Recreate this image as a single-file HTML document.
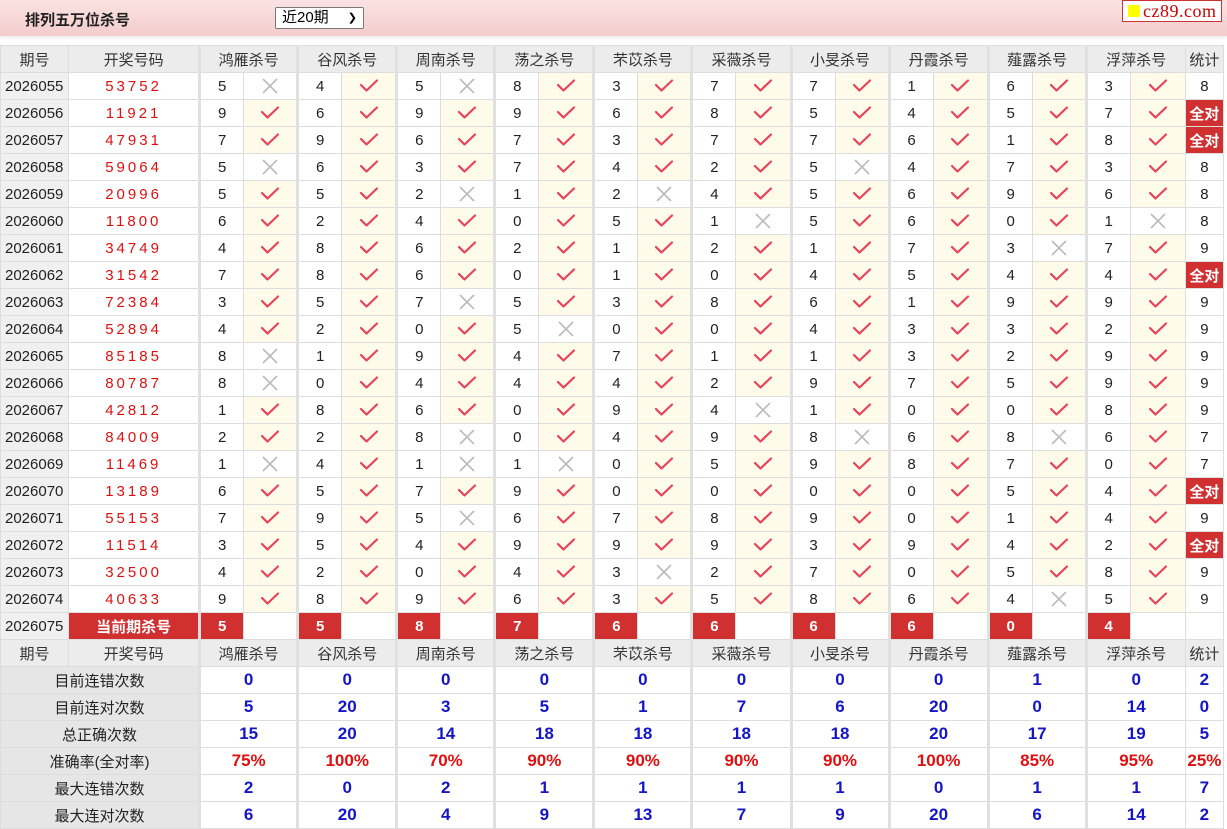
<!DOCTYPE html>
<html><head><meta charset="utf-8">
<style>
body{margin:0;width:1227px;height:829px;background:#fff;font-family:"Liberation Sans","Noto Sans CJK SC",sans-serif;position:relative;overflow:hidden}
.top{position:absolute;left:0;top:0;width:1227px;height:36px;background:linear-gradient(#fbe3e3,#f4cccc);box-shadow:0 2px 3px #eee}
.title{position:absolute;left:25px;top:9px;font-size:15px;font-weight:bold;color:#222}
.sel{position:absolute;left:275px;top:7px;border:1px solid #777;border-radius:2px;background:#fff;font-size:15px;line-height:20px;padding-left:6px;box-sizing:border-box;width:89px;height:22px}
.sel span{position:absolute;right:6px;top:0;font-size:11px}
.logo{position:absolute;left:1122px;top:0;width:100px;height:22px;border:1px solid #c33;background:#fff;box-sizing:border-box}
.logo i{position:absolute;left:5px;top:4px;width:12px;height:12px;background:#ff0}
.logo b{position:absolute;left:20px;top:0;font:18px "Liberation Serif",serif;color:#c00;letter-spacing:0.5px;line-height:20px;font-weight:normal}
table{position:absolute;left:0;top:45px;border-collapse:collapse;table-layout:fixed;width:1224px}
td{border:1px solid #ddd;height:26px;padding:0;text-align:center;font-size:15px;color:#222;white-space:nowrap;overflow:hidden}
tr.h td{background:#ececec;color:#333}
td.p{background:#f0f0f0;text-align:left;padding-left:4px;font-size:15px}
td.k{color:#d11;letter-spacing:3px}
td.g{border-left:3px solid #e0e0e0}
td.y{background:#fffbea}
td.n{background:#fff}
td.r{background:#d03030;color:#fff;font-weight:bold}
td.rl{background:#d03030;color:#fff;font-weight:bold}
td.l{background:#e6e6e6;color:#222}
td.b{color:#1515c8;font-weight:bold;font-size:17px}
td.pc{color:#e01010;font-weight:bold;font-size:17px}
svg{display:block;margin:auto}
</style></head><body>
<svg width="0" height="0" style="position:absolute"><defs>
<symbol id="c" viewBox="0 0 22 16"><path d="M3 7 L8.5 12.5 L19 2.5" fill="none" stroke="#e8435a" stroke-width="2.2" stroke-linecap="round" stroke-linejoin="round"/></symbol>
<symbol id="x" viewBox="0 0 16 16"><path d="M1 1 L15 15 M15 1 L1 15" fill="none" stroke="#bbb" stroke-width="1.6"/></symbol>
</defs></svg>
<div class="top"><div class="title">排列五万位杀号</div><div class="sel">近20期<span>&#10095;</span></div></div>
<div class="logo"><i></i><b>cz89.com</b></div>
<table>
<colgroup><col style="width:68px"><col style="width:131px">
<col style="width:44px"><col style="width:54px"><col style="width:44px"><col style="width:55px"><col style="width:44px"><col style="width:54px"><col style="width:44px"><col style="width:55px"><col style="width:44px"><col style="width:54px"><col style="width:44px"><col style="width:55px"><col style="width:44px"><col style="width:54px"><col style="width:44px"><col style="width:55px"><col style="width:44px"><col style="width:54px"><col style="width:44px"><col style="width:55px"><col style="width:38px"></colgroup>
<tr class="h"><td>期号</td><td>开奖号码</td><td class="g" colspan="2">鸿雁杀号</td><td class="g" colspan="2">谷风杀号</td><td class="g" colspan="2">周南杀号</td><td class="g" colspan="2">荡之杀号</td><td class="g" colspan="2">芣苡杀号</td><td class="g" colspan="2">采薇杀号</td><td class="g" colspan="2">小旻杀号</td><td class="g" colspan="2">丹霞杀号</td><td class="g" colspan="2">薤露杀号</td><td class="g" colspan="2">浮萍杀号</td><td>统计</td></tr>
<tr><td class="p">2026055</td><td class="k">53752</td><td class="g">5</td><td class="n"><svg width="16" height="16"><use href="#x"/></svg></td><td class="g">4</td><td class="y"><svg width="22" height="16"><use href="#c"/></svg></td><td class="g">5</td><td class="n"><svg width="16" height="16"><use href="#x"/></svg></td><td class="g">8</td><td class="y"><svg width="22" height="16"><use href="#c"/></svg></td><td class="g">3</td><td class="y"><svg width="22" height="16"><use href="#c"/></svg></td><td class="g">7</td><td class="y"><svg width="22" height="16"><use href="#c"/></svg></td><td class="g">7</td><td class="y"><svg width="22" height="16"><use href="#c"/></svg></td><td class="g">1</td><td class="y"><svg width="22" height="16"><use href="#c"/></svg></td><td class="g">6</td><td class="y"><svg width="22" height="16"><use href="#c"/></svg></td><td class="g">3</td><td class="y"><svg width="22" height="16"><use href="#c"/></svg></td><td>8</td></tr>
<tr><td class="p">2026056</td><td class="k">11921</td><td class="g">9</td><td class="y"><svg width="22" height="16"><use href="#c"/></svg></td><td class="g">6</td><td class="y"><svg width="22" height="16"><use href="#c"/></svg></td><td class="g">9</td><td class="y"><svg width="22" height="16"><use href="#c"/></svg></td><td class="g">9</td><td class="y"><svg width="22" height="16"><use href="#c"/></svg></td><td class="g">6</td><td class="y"><svg width="22" height="16"><use href="#c"/></svg></td><td class="g">8</td><td class="y"><svg width="22" height="16"><use href="#c"/></svg></td><td class="g">5</td><td class="y"><svg width="22" height="16"><use href="#c"/></svg></td><td class="g">4</td><td class="y"><svg width="22" height="16"><use href="#c"/></svg></td><td class="g">5</td><td class="y"><svg width="22" height="16"><use href="#c"/></svg></td><td class="g">7</td><td class="y"><svg width="22" height="16"><use href="#c"/></svg></td><td class="r">全对</td></tr>
<tr><td class="p">2026057</td><td class="k">47931</td><td class="g">7</td><td class="y"><svg width="22" height="16"><use href="#c"/></svg></td><td class="g">9</td><td class="y"><svg width="22" height="16"><use href="#c"/></svg></td><td class="g">6</td><td class="y"><svg width="22" height="16"><use href="#c"/></svg></td><td class="g">7</td><td class="y"><svg width="22" height="16"><use href="#c"/></svg></td><td class="g">3</td><td class="y"><svg width="22" height="16"><use href="#c"/></svg></td><td class="g">7</td><td class="y"><svg width="22" height="16"><use href="#c"/></svg></td><td class="g">7</td><td class="y"><svg width="22" height="16"><use href="#c"/></svg></td><td class="g">6</td><td class="y"><svg width="22" height="16"><use href="#c"/></svg></td><td class="g">1</td><td class="y"><svg width="22" height="16"><use href="#c"/></svg></td><td class="g">8</td><td class="y"><svg width="22" height="16"><use href="#c"/></svg></td><td class="r">全对</td></tr>
<tr><td class="p">2026058</td><td class="k">59064</td><td class="g">5</td><td class="n"><svg width="16" height="16"><use href="#x"/></svg></td><td class="g">6</td><td class="y"><svg width="22" height="16"><use href="#c"/></svg></td><td class="g">3</td><td class="y"><svg width="22" height="16"><use href="#c"/></svg></td><td class="g">7</td><td class="y"><svg width="22" height="16"><use href="#c"/></svg></td><td class="g">4</td><td class="y"><svg width="22" height="16"><use href="#c"/></svg></td><td class="g">2</td><td class="y"><svg width="22" height="16"><use href="#c"/></svg></td><td class="g">5</td><td class="n"><svg width="16" height="16"><use href="#x"/></svg></td><td class="g">4</td><td class="y"><svg width="22" height="16"><use href="#c"/></svg></td><td class="g">7</td><td class="y"><svg width="22" height="16"><use href="#c"/></svg></td><td class="g">3</td><td class="y"><svg width="22" height="16"><use href="#c"/></svg></td><td>8</td></tr>
<tr><td class="p">2026059</td><td class="k">20996</td><td class="g">5</td><td class="y"><svg width="22" height="16"><use href="#c"/></svg></td><td class="g">5</td><td class="y"><svg width="22" height="16"><use href="#c"/></svg></td><td class="g">2</td><td class="n"><svg width="16" height="16"><use href="#x"/></svg></td><td class="g">1</td><td class="y"><svg width="22" height="16"><use href="#c"/></svg></td><td class="g">2</td><td class="n"><svg width="16" height="16"><use href="#x"/></svg></td><td class="g">4</td><td class="y"><svg width="22" height="16"><use href="#c"/></svg></td><td class="g">5</td><td class="y"><svg width="22" height="16"><use href="#c"/></svg></td><td class="g">6</td><td class="y"><svg width="22" height="16"><use href="#c"/></svg></td><td class="g">9</td><td class="y"><svg width="22" height="16"><use href="#c"/></svg></td><td class="g">6</td><td class="y"><svg width="22" height="16"><use href="#c"/></svg></td><td>8</td></tr>
<tr><td class="p">2026060</td><td class="k">11800</td><td class="g">6</td><td class="y"><svg width="22" height="16"><use href="#c"/></svg></td><td class="g">2</td><td class="y"><svg width="22" height="16"><use href="#c"/></svg></td><td class="g">4</td><td class="y"><svg width="22" height="16"><use href="#c"/></svg></td><td class="g">0</td><td class="y"><svg width="22" height="16"><use href="#c"/></svg></td><td class="g">5</td><td class="y"><svg width="22" height="16"><use href="#c"/></svg></td><td class="g">1</td><td class="n"><svg width="16" height="16"><use href="#x"/></svg></td><td class="g">5</td><td class="y"><svg width="22" height="16"><use href="#c"/></svg></td><td class="g">6</td><td class="y"><svg width="22" height="16"><use href="#c"/></svg></td><td class="g">0</td><td class="y"><svg width="22" height="16"><use href="#c"/></svg></td><td class="g">1</td><td class="n"><svg width="16" height="16"><use href="#x"/></svg></td><td>8</td></tr>
<tr><td class="p">2026061</td><td class="k">34749</td><td class="g">4</td><td class="y"><svg width="22" height="16"><use href="#c"/></svg></td><td class="g">8</td><td class="y"><svg width="22" height="16"><use href="#c"/></svg></td><td class="g">6</td><td class="y"><svg width="22" height="16"><use href="#c"/></svg></td><td class="g">2</td><td class="y"><svg width="22" height="16"><use href="#c"/></svg></td><td class="g">1</td><td class="y"><svg width="22" height="16"><use href="#c"/></svg></td><td class="g">2</td><td class="y"><svg width="22" height="16"><use href="#c"/></svg></td><td class="g">1</td><td class="y"><svg width="22" height="16"><use href="#c"/></svg></td><td class="g">7</td><td class="y"><svg width="22" height="16"><use href="#c"/></svg></td><td class="g">3</td><td class="n"><svg width="16" height="16"><use href="#x"/></svg></td><td class="g">7</td><td class="y"><svg width="22" height="16"><use href="#c"/></svg></td><td>9</td></tr>
<tr><td class="p">2026062</td><td class="k">31542</td><td class="g">7</td><td class="y"><svg width="22" height="16"><use href="#c"/></svg></td><td class="g">8</td><td class="y"><svg width="22" height="16"><use href="#c"/></svg></td><td class="g">6</td><td class="y"><svg width="22" height="16"><use href="#c"/></svg></td><td class="g">0</td><td class="y"><svg width="22" height="16"><use href="#c"/></svg></td><td class="g">1</td><td class="y"><svg width="22" height="16"><use href="#c"/></svg></td><td class="g">0</td><td class="y"><svg width="22" height="16"><use href="#c"/></svg></td><td class="g">4</td><td class="y"><svg width="22" height="16"><use href="#c"/></svg></td><td class="g">5</td><td class="y"><svg width="22" height="16"><use href="#c"/></svg></td><td class="g">4</td><td class="y"><svg width="22" height="16"><use href="#c"/></svg></td><td class="g">4</td><td class="y"><svg width="22" height="16"><use href="#c"/></svg></td><td class="r">全对</td></tr>
<tr><td class="p">2026063</td><td class="k">72384</td><td class="g">3</td><td class="y"><svg width="22" height="16"><use href="#c"/></svg></td><td class="g">5</td><td class="y"><svg width="22" height="16"><use href="#c"/></svg></td><td class="g">7</td><td class="n"><svg width="16" height="16"><use href="#x"/></svg></td><td class="g">5</td><td class="y"><svg width="22" height="16"><use href="#c"/></svg></td><td class="g">3</td><td class="y"><svg width="22" height="16"><use href="#c"/></svg></td><td class="g">8</td><td class="y"><svg width="22" height="16"><use href="#c"/></svg></td><td class="g">6</td><td class="y"><svg width="22" height="16"><use href="#c"/></svg></td><td class="g">1</td><td class="y"><svg width="22" height="16"><use href="#c"/></svg></td><td class="g">9</td><td class="y"><svg width="22" height="16"><use href="#c"/></svg></td><td class="g">9</td><td class="y"><svg width="22" height="16"><use href="#c"/></svg></td><td>9</td></tr>
<tr><td class="p">2026064</td><td class="k">52894</td><td class="g">4</td><td class="y"><svg width="22" height="16"><use href="#c"/></svg></td><td class="g">2</td><td class="y"><svg width="22" height="16"><use href="#c"/></svg></td><td class="g">0</td><td class="y"><svg width="22" height="16"><use href="#c"/></svg></td><td class="g">5</td><td class="n"><svg width="16" height="16"><use href="#x"/></svg></td><td class="g">0</td><td class="y"><svg width="22" height="16"><use href="#c"/></svg></td><td class="g">0</td><td class="y"><svg width="22" height="16"><use href="#c"/></svg></td><td class="g">4</td><td class="y"><svg width="22" height="16"><use href="#c"/></svg></td><td class="g">3</td><td class="y"><svg width="22" height="16"><use href="#c"/></svg></td><td class="g">3</td><td class="y"><svg width="22" height="16"><use href="#c"/></svg></td><td class="g">2</td><td class="y"><svg width="22" height="16"><use href="#c"/></svg></td><td>9</td></tr>
<tr><td class="p">2026065</td><td class="k">85185</td><td class="g">8</td><td class="n"><svg width="16" height="16"><use href="#x"/></svg></td><td class="g">1</td><td class="y"><svg width="22" height="16"><use href="#c"/></svg></td><td class="g">9</td><td class="y"><svg width="22" height="16"><use href="#c"/></svg></td><td class="g">4</td><td class="y"><svg width="22" height="16"><use href="#c"/></svg></td><td class="g">7</td><td class="y"><svg width="22" height="16"><use href="#c"/></svg></td><td class="g">1</td><td class="y"><svg width="22" height="16"><use href="#c"/></svg></td><td class="g">1</td><td class="y"><svg width="22" height="16"><use href="#c"/></svg></td><td class="g">3</td><td class="y"><svg width="22" height="16"><use href="#c"/></svg></td><td class="g">2</td><td class="y"><svg width="22" height="16"><use href="#c"/></svg></td><td class="g">9</td><td class="y"><svg width="22" height="16"><use href="#c"/></svg></td><td>9</td></tr>
<tr><td class="p">2026066</td><td class="k">80787</td><td class="g">8</td><td class="n"><svg width="16" height="16"><use href="#x"/></svg></td><td class="g">0</td><td class="y"><svg width="22" height="16"><use href="#c"/></svg></td><td class="g">4</td><td class="y"><svg width="22" height="16"><use href="#c"/></svg></td><td class="g">4</td><td class="y"><svg width="22" height="16"><use href="#c"/></svg></td><td class="g">4</td><td class="y"><svg width="22" height="16"><use href="#c"/></svg></td><td class="g">2</td><td class="y"><svg width="22" height="16"><use href="#c"/></svg></td><td class="g">9</td><td class="y"><svg width="22" height="16"><use href="#c"/></svg></td><td class="g">7</td><td class="y"><svg width="22" height="16"><use href="#c"/></svg></td><td class="g">5</td><td class="y"><svg width="22" height="16"><use href="#c"/></svg></td><td class="g">9</td><td class="y"><svg width="22" height="16"><use href="#c"/></svg></td><td>9</td></tr>
<tr><td class="p">2026067</td><td class="k">42812</td><td class="g">1</td><td class="y"><svg width="22" height="16"><use href="#c"/></svg></td><td class="g">8</td><td class="y"><svg width="22" height="16"><use href="#c"/></svg></td><td class="g">6</td><td class="y"><svg width="22" height="16"><use href="#c"/></svg></td><td class="g">0</td><td class="y"><svg width="22" height="16"><use href="#c"/></svg></td><td class="g">9</td><td class="y"><svg width="22" height="16"><use href="#c"/></svg></td><td class="g">4</td><td class="n"><svg width="16" height="16"><use href="#x"/></svg></td><td class="g">1</td><td class="y"><svg width="22" height="16"><use href="#c"/></svg></td><td class="g">0</td><td class="y"><svg width="22" height="16"><use href="#c"/></svg></td><td class="g">0</td><td class="y"><svg width="22" height="16"><use href="#c"/></svg></td><td class="g">8</td><td class="y"><svg width="22" height="16"><use href="#c"/></svg></td><td>9</td></tr>
<tr><td class="p">2026068</td><td class="k">84009</td><td class="g">2</td><td class="y"><svg width="22" height="16"><use href="#c"/></svg></td><td class="g">2</td><td class="y"><svg width="22" height="16"><use href="#c"/></svg></td><td class="g">8</td><td class="n"><svg width="16" height="16"><use href="#x"/></svg></td><td class="g">0</td><td class="y"><svg width="22" height="16"><use href="#c"/></svg></td><td class="g">4</td><td class="y"><svg width="22" height="16"><use href="#c"/></svg></td><td class="g">9</td><td class="y"><svg width="22" height="16"><use href="#c"/></svg></td><td class="g">8</td><td class="n"><svg width="16" height="16"><use href="#x"/></svg></td><td class="g">6</td><td class="y"><svg width="22" height="16"><use href="#c"/></svg></td><td class="g">8</td><td class="n"><svg width="16" height="16"><use href="#x"/></svg></td><td class="g">6</td><td class="y"><svg width="22" height="16"><use href="#c"/></svg></td><td>7</td></tr>
<tr><td class="p">2026069</td><td class="k">11469</td><td class="g">1</td><td class="n"><svg width="16" height="16"><use href="#x"/></svg></td><td class="g">4</td><td class="y"><svg width="22" height="16"><use href="#c"/></svg></td><td class="g">1</td><td class="n"><svg width="16" height="16"><use href="#x"/></svg></td><td class="g">1</td><td class="n"><svg width="16" height="16"><use href="#x"/></svg></td><td class="g">0</td><td class="y"><svg width="22" height="16"><use href="#c"/></svg></td><td class="g">5</td><td class="y"><svg width="22" height="16"><use href="#c"/></svg></td><td class="g">9</td><td class="y"><svg width="22" height="16"><use href="#c"/></svg></td><td class="g">8</td><td class="y"><svg width="22" height="16"><use href="#c"/></svg></td><td class="g">7</td><td class="y"><svg width="22" height="16"><use href="#c"/></svg></td><td class="g">0</td><td class="y"><svg width="22" height="16"><use href="#c"/></svg></td><td>7</td></tr>
<tr><td class="p">2026070</td><td class="k">13189</td><td class="g">6</td><td class="y"><svg width="22" height="16"><use href="#c"/></svg></td><td class="g">5</td><td class="y"><svg width="22" height="16"><use href="#c"/></svg></td><td class="g">7</td><td class="y"><svg width="22" height="16"><use href="#c"/></svg></td><td class="g">9</td><td class="y"><svg width="22" height="16"><use href="#c"/></svg></td><td class="g">0</td><td class="y"><svg width="22" height="16"><use href="#c"/></svg></td><td class="g">0</td><td class="y"><svg width="22" height="16"><use href="#c"/></svg></td><td class="g">0</td><td class="y"><svg width="22" height="16"><use href="#c"/></svg></td><td class="g">0</td><td class="y"><svg width="22" height="16"><use href="#c"/></svg></td><td class="g">5</td><td class="y"><svg width="22" height="16"><use href="#c"/></svg></td><td class="g">4</td><td class="y"><svg width="22" height="16"><use href="#c"/></svg></td><td class="r">全对</td></tr>
<tr><td class="p">2026071</td><td class="k">55153</td><td class="g">7</td><td class="y"><svg width="22" height="16"><use href="#c"/></svg></td><td class="g">9</td><td class="y"><svg width="22" height="16"><use href="#c"/></svg></td><td class="g">5</td><td class="n"><svg width="16" height="16"><use href="#x"/></svg></td><td class="g">6</td><td class="y"><svg width="22" height="16"><use href="#c"/></svg></td><td class="g">7</td><td class="y"><svg width="22" height="16"><use href="#c"/></svg></td><td class="g">8</td><td class="y"><svg width="22" height="16"><use href="#c"/></svg></td><td class="g">9</td><td class="y"><svg width="22" height="16"><use href="#c"/></svg></td><td class="g">0</td><td class="y"><svg width="22" height="16"><use href="#c"/></svg></td><td class="g">1</td><td class="y"><svg width="22" height="16"><use href="#c"/></svg></td><td class="g">4</td><td class="y"><svg width="22" height="16"><use href="#c"/></svg></td><td>9</td></tr>
<tr><td class="p">2026072</td><td class="k">11514</td><td class="g">3</td><td class="y"><svg width="22" height="16"><use href="#c"/></svg></td><td class="g">5</td><td class="y"><svg width="22" height="16"><use href="#c"/></svg></td><td class="g">4</td><td class="y"><svg width="22" height="16"><use href="#c"/></svg></td><td class="g">9</td><td class="y"><svg width="22" height="16"><use href="#c"/></svg></td><td class="g">9</td><td class="y"><svg width="22" height="16"><use href="#c"/></svg></td><td class="g">9</td><td class="y"><svg width="22" height="16"><use href="#c"/></svg></td><td class="g">3</td><td class="y"><svg width="22" height="16"><use href="#c"/></svg></td><td class="g">9</td><td class="y"><svg width="22" height="16"><use href="#c"/></svg></td><td class="g">4</td><td class="y"><svg width="22" height="16"><use href="#c"/></svg></td><td class="g">2</td><td class="y"><svg width="22" height="16"><use href="#c"/></svg></td><td class="r">全对</td></tr>
<tr><td class="p">2026073</td><td class="k">32500</td><td class="g">4</td><td class="y"><svg width="22" height="16"><use href="#c"/></svg></td><td class="g">2</td><td class="y"><svg width="22" height="16"><use href="#c"/></svg></td><td class="g">0</td><td class="y"><svg width="22" height="16"><use href="#c"/></svg></td><td class="g">4</td><td class="y"><svg width="22" height="16"><use href="#c"/></svg></td><td class="g">3</td><td class="n"><svg width="16" height="16"><use href="#x"/></svg></td><td class="g">2</td><td class="y"><svg width="22" height="16"><use href="#c"/></svg></td><td class="g">7</td><td class="y"><svg width="22" height="16"><use href="#c"/></svg></td><td class="g">0</td><td class="y"><svg width="22" height="16"><use href="#c"/></svg></td><td class="g">5</td><td class="y"><svg width="22" height="16"><use href="#c"/></svg></td><td class="g">8</td><td class="y"><svg width="22" height="16"><use href="#c"/></svg></td><td>9</td></tr>
<tr><td class="p">2026074</td><td class="k">40633</td><td class="g">9</td><td class="y"><svg width="22" height="16"><use href="#c"/></svg></td><td class="g">8</td><td class="y"><svg width="22" height="16"><use href="#c"/></svg></td><td class="g">9</td><td class="y"><svg width="22" height="16"><use href="#c"/></svg></td><td class="g">6</td><td class="y"><svg width="22" height="16"><use href="#c"/></svg></td><td class="g">3</td><td class="y"><svg width="22" height="16"><use href="#c"/></svg></td><td class="g">5</td><td class="y"><svg width="22" height="16"><use href="#c"/></svg></td><td class="g">8</td><td class="y"><svg width="22" height="16"><use href="#c"/></svg></td><td class="g">6</td><td class="y"><svg width="22" height="16"><use href="#c"/></svg></td><td class="g">4</td><td class="n"><svg width="16" height="16"><use href="#x"/></svg></td><td class="g">5</td><td class="y"><svg width="22" height="16"><use href="#c"/></svg></td><td>9</td></tr>
<tr><td class="p">2026075</td><td class="r">当前期杀号</td><td class="g rl">5</td><td></td><td class="g rl">5</td><td></td><td class="g rl">8</td><td></td><td class="g rl">7</td><td></td><td class="g rl">6</td><td></td><td class="g rl">6</td><td></td><td class="g rl">6</td><td></td><td class="g rl">6</td><td></td><td class="g rl">0</td><td></td><td class="g rl">4</td><td></td><td></td></tr>
<tr class="h"><td>期号</td><td>开奖号码</td><td class="g" colspan="2">鸿雁杀号</td><td class="g" colspan="2">谷风杀号</td><td class="g" colspan="2">周南杀号</td><td class="g" colspan="2">荡之杀号</td><td class="g" colspan="2">芣苡杀号</td><td class="g" colspan="2">采薇杀号</td><td class="g" colspan="2">小旻杀号</td><td class="g" colspan="2">丹霞杀号</td><td class="g" colspan="2">薤露杀号</td><td class="g" colspan="2">浮萍杀号</td><td>统计</td></tr>
<tr><td class="l" colspan="2">目前连错次数</td><td class="g b" colspan="2">0</td><td class="g b" colspan="2">0</td><td class="g b" colspan="2">0</td><td class="g b" colspan="2">0</td><td class="g b" colspan="2">0</td><td class="g b" colspan="2">0</td><td class="g b" colspan="2">0</td><td class="g b" colspan="2">0</td><td class="g b" colspan="2">1</td><td class="g b" colspan="2">0</td><td class="b">2</td></tr>
<tr><td class="l" colspan="2">目前连对次数</td><td class="g b" colspan="2">5</td><td class="g b" colspan="2">20</td><td class="g b" colspan="2">3</td><td class="g b" colspan="2">5</td><td class="g b" colspan="2">1</td><td class="g b" colspan="2">7</td><td class="g b" colspan="2">6</td><td class="g b" colspan="2">20</td><td class="g b" colspan="2">0</td><td class="g b" colspan="2">14</td><td class="b">0</td></tr>
<tr><td class="l" colspan="2">总正确次数</td><td class="g b" colspan="2">15</td><td class="g b" colspan="2">20</td><td class="g b" colspan="2">14</td><td class="g b" colspan="2">18</td><td class="g b" colspan="2">18</td><td class="g b" colspan="2">18</td><td class="g b" colspan="2">18</td><td class="g b" colspan="2">20</td><td class="g b" colspan="2">17</td><td class="g b" colspan="2">19</td><td class="b">5</td></tr>
<tr><td class="l" colspan="2">准确率(全对率)</td><td class="g pc" colspan="2">75%</td><td class="g pc" colspan="2">100%</td><td class="g pc" colspan="2">70%</td><td class="g pc" colspan="2">90%</td><td class="g pc" colspan="2">90%</td><td class="g pc" colspan="2">90%</td><td class="g pc" colspan="2">90%</td><td class="g pc" colspan="2">100%</td><td class="g pc" colspan="2">85%</td><td class="g pc" colspan="2">95%</td><td class="pc">25%</td></tr>
<tr><td class="l" colspan="2">最大连错次数</td><td class="g b" colspan="2">2</td><td class="g b" colspan="2">0</td><td class="g b" colspan="2">2</td><td class="g b" colspan="2">1</td><td class="g b" colspan="2">1</td><td class="g b" colspan="2">1</td><td class="g b" colspan="2">1</td><td class="g b" colspan="2">0</td><td class="g b" colspan="2">1</td><td class="g b" colspan="2">1</td><td class="b">7</td></tr>
<tr><td class="l" colspan="2">最大连对次数</td><td class="g b" colspan="2">6</td><td class="g b" colspan="2">20</td><td class="g b" colspan="2">4</td><td class="g b" colspan="2">9</td><td class="g b" colspan="2">13</td><td class="g b" colspan="2">7</td><td class="g b" colspan="2">9</td><td class="g b" colspan="2">20</td><td class="g b" colspan="2">6</td><td class="g b" colspan="2">14</td><td class="b">2</td></tr>
</table>
</body></html>
